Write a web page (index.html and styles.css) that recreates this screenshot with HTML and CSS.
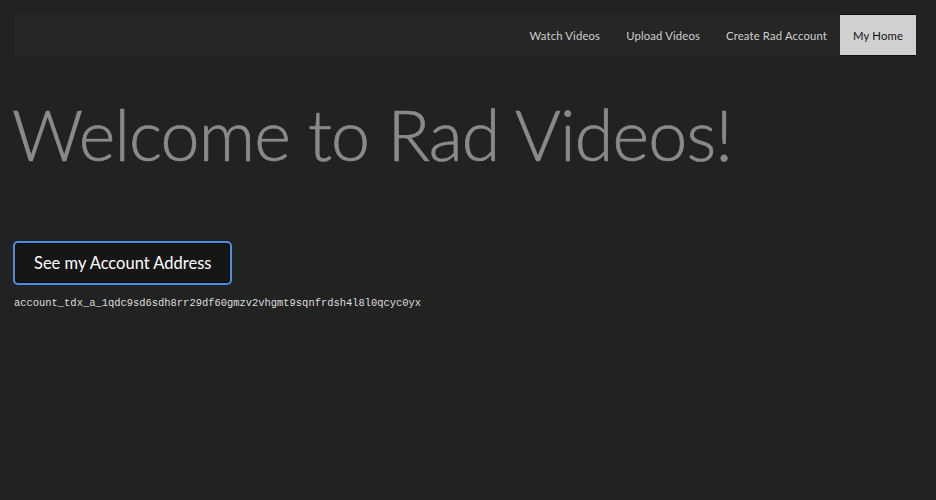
FILE: index.html
```html
<!DOCTYPE html>
<html>
<head>
<meta charset="utf-8">
<link rel="stylesheet" href="styles.css">
</head>
<body>
<div class="page">
  <nav class="nav">
    <a class="nav-item">Watch Videos</a>
    <a class="nav-item">Upload Videos</a>
    <a class="nav-item">Create Rad Account</a>
    <a class="nav-item active">My Home</a>
  </nav>
  <h1 class="title">Welcome to Rad Videos!</h1>
  <button class="account-btn">See my Account Address</button>
  <div class="address">account_tdx_a_1qdc9sd6sdh8rr29df60gmzv2vhgmt9sqnfrdsh4l8l0qcyc0yx</div>
</div>
</body>
</html>
```
FILE: styles.css
```css
html, body {
  margin: 0;
  padding: 0;
  background: #222222;
  height: 100%;
}
body {
  font-family: Lato, "Noto Sans", sans-serif;
}
.page {
  padding: 14px 20px 0 14px;
}
.nav {
  display: flex;
  justify-content: flex-end;
  height: 42px;
  background: #262626;
}
.nav-item {
  display: flex;
  align-items: center;
  padding: 1px 13px 0;
  font-size: 11.3px;
  color: #cfcfcf;
  letter-spacing: 0.15px;
}
.nav-item.active {
  background: #d0d0d0;
  color: #111;
  border-top: 1px solid #111;
  border-bottom: 1px solid #111;
  box-sizing: border-box;
}
.title {
  margin: 38px 0 0 -2px;
  font-size: 70px;
  font-weight: 300;
  color: #8a8a8a;
  -webkit-text-stroke: 0.7px #8a8a8a;
  line-height: 80px;
  letter-spacing: -0.85px;
}
.account-btn {
  display: block;
  margin-top: 67px;
  margin-left: -1px;
  height: 44px;
  padding: 0 19px;
  background: #161616;
  color: #fff;
  font-family: Lato, "Noto Sans", sans-serif;
  font-size: 16.5px;
  border: 2px solid #4a8fe0;
  border-radius: 5px;
  box-shadow: inset 0 0 0 1px #0a0a0a;
}
.address {
  margin-top: 12px;
  font-family: "Liberation Mono", monospace;
  font-size: 10.45px;
  color: #dddddd;
}
```
